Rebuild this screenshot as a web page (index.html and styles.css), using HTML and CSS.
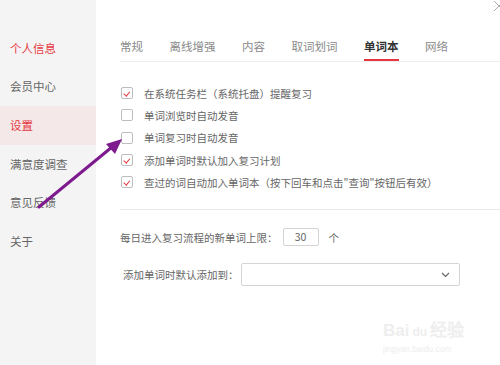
FILE: index.html
```html
<!DOCTYPE html>
<html lang="zh-CN">
<head>
    <meta charset="UTF-8">
    <title>设置 - 单词本</title>
    <link rel="stylesheet" href="styles.css">
</head>
<body>
    <div class="sidebar">
        <div class="nav-item red">个人信息</div>
        <div class="nav-item">会员中心</div>
        <div class="nav-item active">设置</div>
        <div class="nav-item">满意度调查</div>
        <div class="nav-item">意见反馈</div>
        <div class="nav-item">关于</div>
    </div>

    <div class="main">
        <svg class="close" width="12" height="12" viewBox="0 0 12 12">
            <path d="M1 1L11 11M11 1L1 11" stroke="#aaa" stroke-width="1" fill="none"/>
        </svg>

        <div class="tabs">
            <div class="tab">常规</div>
            <div class="tab">离线增强</div>
            <div class="tab">内容</div>
            <div class="tab">取词划词</div>
            <div class="tab current">单词本</div>
            <div class="tab">网络</div>
        </div>

        <div class="options">
            <label class="option"><span class="box checked"></span>在系统任务栏（系统托盘）提醒复习</label>
            <label class="option"><span class="box"></span>单词浏览时自动发音</label>
            <label class="option"><span class="box"></span>单词复习时自动发音</label>
            <label class="option"><span class="box checked"></span>添加单词时默认加入复习计划</label>
            <label class="option"><span class="box checked"></span>查过的词自动加入单词本（按下回车和点击"查询"按钮后有效）</label>
        </div>

        <div class="field limit">
            <span>每日进入复习流程的新单词上限：</span>
            <span class="num-input">30</span>
            <span class="unit">个</span>
        </div>

        <div class="field target">
            <span>添加单词时默认添加到：</span>
            <span class="select">
                <svg width="9" height="6" viewBox="0 0 9 6">
                    <path d="M1 1L4.5 4.5L8 1" stroke="#666" stroke-width="1.2" fill="none"/>
                </svg>
            </span>
        </div>

        <div class="watermark">
            <div class="wm-logo">Bai<span class="wm-du">du</span>经验</div>
            <div class="wm-url">jingyan.baidu.com</div>
        </div>
    </div>

    <!-- 标注箭头 -->
    <svg class="arrow" width="500" height="365" viewBox="0 0 500 365">
        <line x1="39" y1="207" x2="112" y2="147" stroke="#7d1a8e" stroke-width="3" stroke-linecap="round"/>
        <polygon points="122,139 106,144 115,154" fill="#7d1a8e"/>
    </svg>
</body>
</html>
```

FILE: styles.css
```css
body {
    margin: 0;
    width: 500px;
    height: 365px;
    overflow: hidden;
    display: flex;
    position: relative;
    font-family: "Noto Sans CJK SC", "Noto Sans", sans-serif;
    background-color: #fff;
    text-spacing-trim: space-all;
}
.sidebar {
    width: 96px;
    flex-shrink: 0;
    background-color: #f4f4f4;
    padding-top: 28.7px;
}
.nav-item {
    height: 38.7px;
    line-height: 38.7px;
    padding-left: 10px;
    font-size: 11.5px;
    color: #666;
}
.nav-item.red {
    color: #e6373f;
}
.nav-item.active {
    color: #e6373f;
    background-color: #f4e8e8;
}
.main {
    flex-grow: 1;
    position: relative;
    padding-left: 24px;
}
.close {
    position: absolute;
    top: 0;
    right: -5px;
}
.tabs {
    display: flex;
    gap: 26.5px;
    padding-top: 38px;
    border-bottom: 1px solid #ededed;
}
.tab {
    font-size: 11.5px;
    line-height: 16px;
    color: #8a8a8a;
    padding-bottom: 5px;
    border-bottom: 2px solid transparent;
}
.tab.current {
    color: #333;
    font-weight: bold;
    border-bottom-color: #e6373f;
}
.options {
    padding: 20px 0 16px;
    border-bottom: 1px solid #e8e8e8;
}
.option {
    display: flex;
    align-items: center;
    height: 22.3px;
    font-size: 10.5px;
    color: #666;
}
.box {
    width: 10px;
    height: 10px;
    border: 1px solid #bdbdbd;
    border-radius: 2px;
    margin-left: 1px;
    margin-right: 11px;
    position: relative;
}
.box.checked::after {
    content: "";
    position: absolute;
    left: 3px;
    top: 2px;
    width: 2.5px;
    height: 4.5px;
    border-right: 1.5px solid #e6373f;
    border-bottom: 1.5px solid #e6373f;
    transform: rotate(40deg);
}
.field {
    display: flex;
    align-items: center;
    font-size: 10.5px;
    color: #666;
}
.limit {
    margin-top: 18px;
    height: 18px;
}
.num-input {
    width: 34px;
    height: 16px;
    line-height: 16px;
    border: 1px solid #d4d4d4;
    border-radius: 2px;
    text-align: center;
    margin-left: 5px;
}
.unit {
    margin-left: 10px;
}
.target {
    margin-top: 17px;
    height: 23px;
    padding-left: 3px;
}
.select {
    width: 208px;
    height: 21px;
    border: 1px solid #d4d4d4;
    border-radius: 2px;
    margin-left: 2px;
    display: flex;
    align-items: center;
    justify-content: flex-end;
    padding-right: 9px;
}
.watermark {
    position: absolute;
    left: 287px;
    top: 321px;
    color: #eeeeee;
    font-family: "Liberation Sans", sans-serif;
}
.wm-logo {
    font-size: 17px;
    font-weight: bold;
    line-height: 20px;
}
.wm-du {
    font-size: 12px;
    margin: 0 3px;
}
.wm-url {
    font-size: 8.5px;
    line-height: 14px;
}
.arrow {
    position: absolute;
    left: 0;
    top: 0;
    pointer-events: none;
}
```
